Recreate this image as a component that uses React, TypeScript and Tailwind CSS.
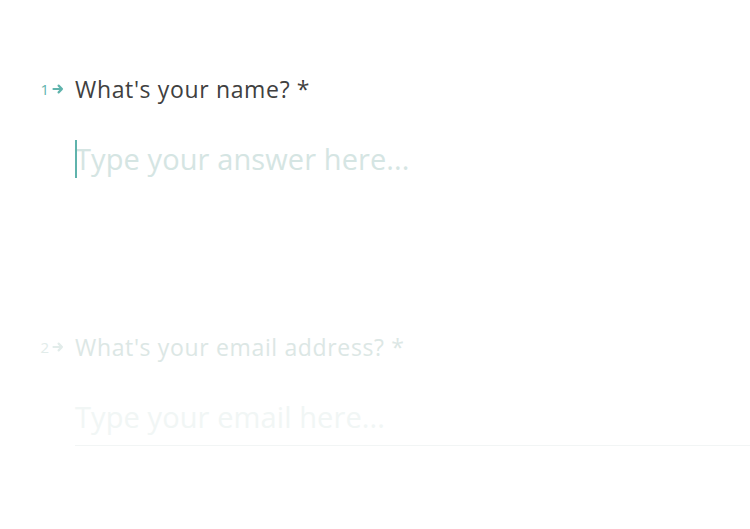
import React from "react";

function Arrow({ className }: { className?: string }) {
  return (
    <svg viewBox="0 0 12 12" className={className} fill="none" stroke="currentColor" strokeWidth="2.2" strokeLinecap="round" strokeLinejoin="round">
      <path d="M1.5 6h8.5M6.6 2.6L10 6l-3.4 3.4" />
    </svg>
  );
}

function Question({
  n,
  title,
  placeholder,
  active,
}: {
  n: number;
  title: string;
  placeholder: string;
  active: boolean;
}) {
  return (
    <div className="flex flex-col">
      <div className="flex items-center">
        <div className={`w-[75px] flex items-center justify-end pr-[11px] gap-[3px] ${active ? "text-[#5fb3ac]" : "text-[#e2ecea]"}`}>
          <span className="text-[15px] leading-none">{n}</span>
          <Arrow className="w-[12px] h-[12px]" />
        </div>
        <div className={`text-[23px] leading-[30px] tracking-[0.65px] ${active ? "text-[#404040]" : "text-[#dce7e5]"}`}>
          {title}
        </div>
      </div>
      <div className="pl-[75px] mt-[35px]">
        <div className={`relative ${active ? "" : "border-b border-[#f2f5f5] pb-[8px]"}`}>
          {active && <div className="absolute left-0 top-[1px] w-[1.5px] h-[38px] bg-[#5fb3ac]" />}
          <div className={`text-[29px] leading-[40px] h-[40px] tracking-[0.1px] ${active ? "text-[#d5e5e3]" : "text-[#f1f6f5]"}`}>
            {placeholder}
          </div>
        </div>
      </div>
    </div>
  );
}

export default function App() {
  return (
    <div className="w-[750px] h-[529px] bg-white overflow-hidden" style={{ fontFamily: '"Open Sans", "Liberation Sans", sans-serif' }}>
      <div className="pt-[74px] flex flex-col">
        <Question n={1} title="What's your name? *" placeholder="Type your answer here..." active />
        <div className="h-[153px]" />
        <Question n={2} title="What's your email address? *" placeholder="Type your email here..." active={false} />
      </div>
    </div>
  );
}
